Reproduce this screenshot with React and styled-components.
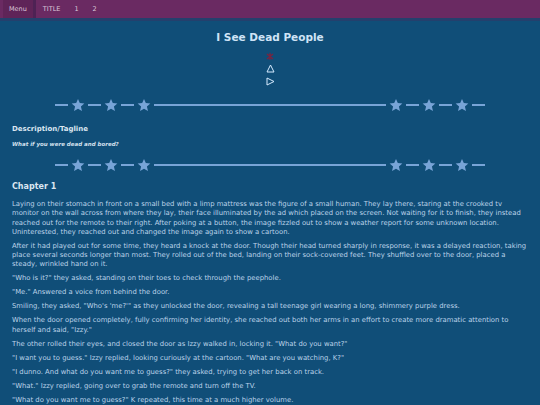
import React from 'react';
import styled, { createGlobalStyle } from 'styled-components';

const GlobalStyle = createGlobalStyle`
  html, body {
    margin: 0;
    padding: 0;
    background: #104e78;
  }
  body {
    font-family: 'DejaVu Sans', Verdana, sans-serif;
    color: #c3d8ec;
  }
`;

const NavBar = styled.nav`
  display: flex;
  align-items: stretch;
  height: 18px;
  background: #6a2a62;
  border-bottom: 3px solid #24406d;
  font-size: 6.5px;
  color: #dcc8da;
`;

const MenuButton = styled.div`
  display: flex;
  align-items: center;
  margin-left: 3px;
  padding: 0 6px;
  background: #5f2458;
  border-right: 3px solid #4e2254;
`;

const NavLink = styled.span`
  display: flex;
  align-items: center;
  padding: 0 7px;
`;

const Page = styled.main`
  padding: 0 12px 12px;
`;

const Title = styled.h1`
  margin: 10px 0 0;
  text-align: center;
  font-size: 10.5px;
  font-weight: 700;
  color: #cfe3f6;
`;

const IconStack = styled.div`
  display: flex;
  flex-direction: column;
  align-items: center;
  gap: 4px;
  margin-top: 10px;
`;

const Divider = styled.div`
  display: flex;
  align-items: center;
  gap: 3px;
  margin: ${props => props.$margin};
  padding: 0 43px;
`;

const Dash = styled.span`
  flex: none;
  width: 13px;
  height: 2px;
  background: #78a4d7;
`;

const Rule = styled.span`
  flex: 1;
  height: 2px;
  background: #78a4d7;
`;

const SectionLabel = styled.h3`
  margin: 13px 0 0;
  font-size: 7px;
  font-weight: 700;
  color: #dbe6f1;
`;

const Tagline = styled.p`
  margin: 8px 0 0;
  font-size: 5.5px;
  font-weight: 700;
  font-style: italic;
  color: #d3e0ee;
`;

const ChapterTitle = styled.h2`
  margin: 10px 0 0;
  font-size: 8px;
  font-weight: 700;
  color: #dbe6f1;
`;

const Story = styled.div`
  margin-top: 9px;
`;

const Para = styled.p`
  margin: 0 0 4.7px;
  font-size: 6.85px;
  line-height: 9.3px;
  color: #bcd3e9;
`;

function Star() {
  return (
    <svg width="14" height="14" viewBox="0 0 24 24">
      <path
        fill="#78a4d7"
        d="M12 1.5l3.1 7.2 7.8.7-5.9 5.2 1.8 7.7L12 18.3l-6.8 4 1.8-7.7-5.9-5.2 7.8-.7z"
      />
    </svg>
  );
}

function StarDivider({ margin }) {
  return (
    <Divider $margin={margin}>
      <Dash />
      <Star />
      <Dash />
      <Star />
      <Dash />
      <Star />
      <Rule />
      <Star />
      <Dash />
      <Star />
      <Dash />
      <Star />
      <Dash />
    </Divider>
  );
}

function Controls() {
  return (
    <IconStack>
      <svg width="8" height="7" viewBox="0 0 8 7">
        <path d="M1 1l6 5M7 1L1 6M4 0v7" stroke="#7a2440" strokeWidth="1.4" />
      </svg>
      <svg width="9" height="9" viewBox="0 0 9 9">
        <path d="M4.5 1L8 8H1z" fill="none" stroke="#d6ebff" strokeWidth="1" />
      </svg>
      <svg width="9" height="9" viewBox="0 0 9 9">
        <path d="M1 1l7 3.5L1 8z" fill="none" stroke="#d6ebff" strokeWidth="1" />
      </svg>
    </IconStack>
  );
}

const paragraphs = [
  'Laying on their stomach in front on a small bed with a limp mattress was the figure of a small human. They lay there, staring at the crooked tv monitor on the wall across from where they lay, their face illuminated by the ad which placed on the screen. Not waiting for it to finish, they instead reached out for the remote to their right. After poking at a button, the image fizzled out to show a weather report for some unknown location. Uninterested, they reached out and changed the image again to show a cartoon.',
  'After it had played out for some time, they heard a knock at the door. Though their head turned sharply in response, it was a delayed reaction, taking place several seconds longer than most. They rolled out of the bed, landing on their sock-covered feet. They shuffled over to the door, placed a steady, wrinkled hand on it.',
  '"Who is it?" they asked, standing on their toes to check through the peephole.',
  '"Me." Answered a voice from behind the door.',
  'Smiling, they asked, "Who\'s \'me?\'" as they unlocked the door, revealing a tall teenage girl wearing a long, shimmery purple dress.',
  'When the door opened completely, fully confirming her identity, she reached out both her arms in an effort to create more dramatic attention to herself and said, "Izzy."',
  'The other rolled their eyes, and closed the door as Izzy walked in, locking it. "What do you want?"',
  '"I want you to guess." Izzy replied, looking curiously at the cartoon. "What are you watching, K?"',
  '"I dunno. And what do you want me to guess?" they asked, trying to get her back on track.',
  '"What." Izzy replied, going over to grab the remote and turn off the TV.',
  '"What do you want me to guess?" K repeated, this time at a much higher volume.'
];

export default function App() {
  return (
    <>
      <GlobalStyle />
      <NavBar>
        <MenuButton>Menu</MenuButton>
        <NavLink>TITLE</NavLink>
        <NavLink>1</NavLink>
        <NavLink>2</NavLink>
      </NavBar>
      <Page>
        <Title>I See Dead People</Title>
        <Controls />
        <StarDivider margin="12px 0 0" />
        <SectionLabel>Description/Tagline</SectionLabel>
        <Tagline>What if you were dead and bored?</Tagline>
        <StarDivider margin="11px 0 0" />
        <ChapterTitle>Chapter 1</ChapterTitle>
        <Story>
          {paragraphs.map((text, i) => (
            <Para key={i}>{text}</Para>
          ))}
        </Story>
      </Page>
    </>
  );
}
